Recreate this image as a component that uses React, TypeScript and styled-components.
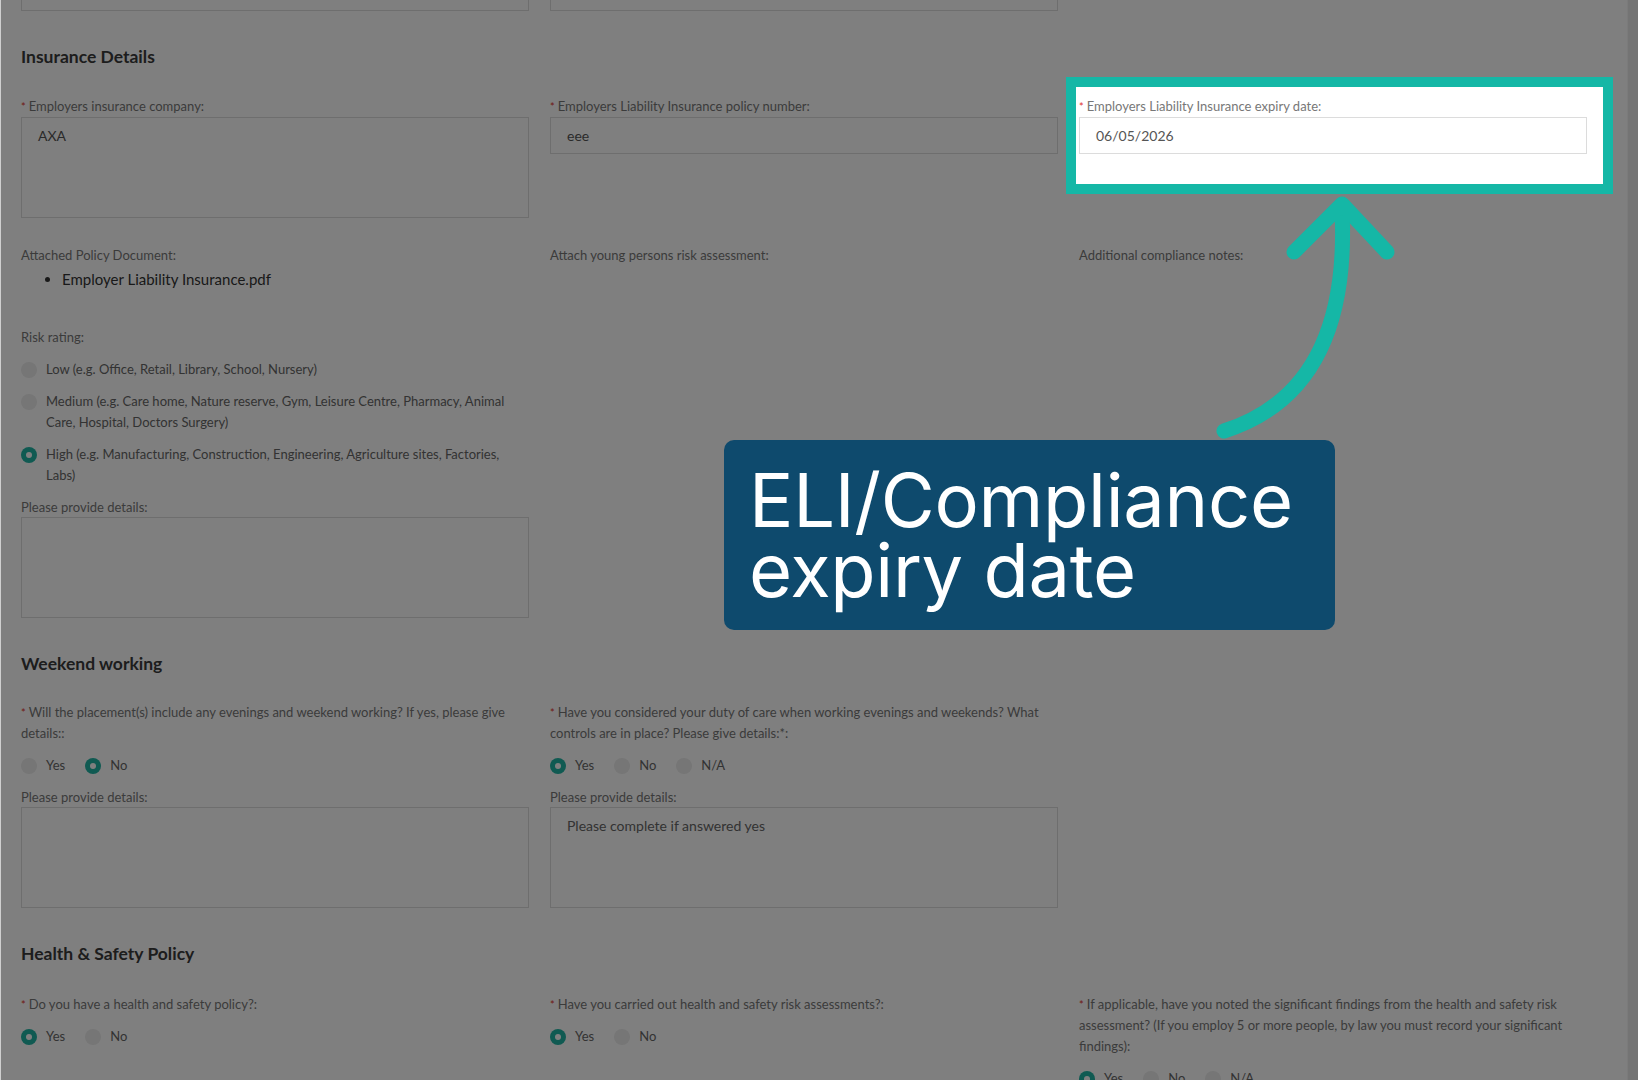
import React from "react";
import styled, { createGlobalStyle } from "styled-components";

const GlobalStyle = createGlobalStyle`
  html, body { margin: 0; padding: 0; }
  body { font-family: Lato, "Liberation Sans", sans-serif; background: #fff; }
  * { box-sizing: border-box; }
`;

const TEAL = "#15b7a6";

const Screen = styled.div`
  position: relative;
  display: flex;
  width: 1638px;
  height: 1080px;
  overflow: hidden;
  background: #fff;
  border-left: 1px solid #cfcfcf;
`;

const Page = styled.div`
  flex: 1;
  padding-left: 20px;
`;

const Scrollbar = styled.div`
  width: 11px;
  background: #e9e9e9;
  border-left: 1px solid #f6f6f6;
`;

const Grid = styled.div<{ $top?: number }>`
  display: grid;
  grid-template-columns: repeat(3, 508px);
  column-gap: 21px;
  align-items: start;
  margin-top: ${(p) => p.$top ?? 0}px;
`;

const Stub = styled.div`
  height: 37px;
  margin-top: -26px;
  border: 1px solid #dcdcdc;
`;

const SectionTitle = styled.h2`
  margin: 35px 0 0;
  font-size: 17.5px;
  line-height: 22px;
  font-weight: 700;
  color: #3a3a3a;
`;

const Field = styled.div`
  display: flex;
  flex-direction: column;
`;

const Label = styled.div<{ $tight?: boolean }>`
  font-size: 13px;
  line-height: ${(p) => (p.$tight ? 19 : 21)}px;
  color: #777;
`;

const Star = styled.span`
  color: #e0322c;
  font-size: 11px;
  margin-right: 3px;
`;

const Box = styled.div<{ $tall?: boolean; $muted?: boolean }>`
  height: ${(p) => (p.$tall ? 101 : 37)}px;
  padding: 9px 16px;
  border: 1px solid #dcdcdc;
  background: #fff;
  font-size: 14px;
  line-height: 18px;
  color: ${(p) => (p.$muted ? "#666" : "#555")};
`;

const FileList = styled.ul`
  margin: 2px 0 0;
  padding-left: 41px;
  font-size: 15px;
  line-height: 22px;
  color: #333;
`;

const Stack = styled.div<{ $gap: number; $top?: number }>`
  display: flex;
  flex-direction: column;
  gap: ${(p) => p.$gap}px;
  margin-top: ${(p) => p.$top ?? 0}px;
`;

const Inline = styled.div`
  display: flex;
  margin-top: 11px;
  margin-bottom: 12px;
`;

const Option = styled.label<{ $inline?: boolean }>`
  display: flex;
  align-items: flex-start;
  gap: 9px;
  margin-right: ${(p) => (p.$inline ? 20 : 0)}px;
  font-size: 13px;
  line-height: 21px;
  color: #666;
`;

const Dot = styled.span<{ $on?: boolean }>`
  flex: none;
  width: 16px;
  height: 16px;
  margin-top: 2.5px;
  border-radius: 50%;
  background: ${(p) => (p.$on ? "#20b4a4" : "#ececec")};
  display: flex;
  align-items: center;
  justify-content: center;
  &::after {
    content: "";
    width: 6px;
    height: 6px;
    border-radius: 50%;
    background: ${(p) => (p.$on ? "#fff" : "transparent")};
  }
`;

const Spotlight = styled(Field)`
  position: relative;
  z-index: 6;
  &::before {
    content: "";
    position: absolute;
    z-index: -1;
    top: -19px;
    left: -13px;
    right: -26px;
    bottom: -40px;
    background: #fff;
    border: 10px solid ${TEAL};
  }
`;

const Shade = styled.div`
  position: absolute;
  inset: 0;
  z-index: 5;
  background: rgba(0, 0, 0, 0.5);
`;

const ArrowLayer = styled.svg`
  position: absolute;
  inset: 0;
  z-index: 7;
  pointer-events: none;
`;

const Callout = styled.div`
  position: absolute;
  z-index: 7;
  left: 723px;
  top: 440px;
  width: 611px;
  height: 190px;
  padding: 25px 26px 0 25px;
  border-radius: 10px;
  background: #0e4a6d;
  color: #fff;
  font-family: Inter, "Noto Sans", sans-serif;
  font-size: 74px;
  line-height: 70px;
  font-weight: 400;
  letter-spacing: -0.3px;
`;

type Choice = { text: string; on?: boolean };

const Radios = ({ items }: { items: Choice[] }) => (
  <Inline>
    {items.map((c) => (
      <Option key={c.text} $inline>
        <Dot $on={c.on} />
        {c.text}
      </Option>
    ))}
  </Inline>
);

const Req = ({ children }: { children: React.ReactNode }) => (
  <Label>
    <Star>*</Star>
    {children}
  </Label>
);

const riskLevels: Choice[] = [
  { text: "Low (e.g. Office, Retail, Library, School, Nursery)" },
  { text: "Medium (e.g. Care home, Nature reserve, Gym, Leisure Centre, Pharmacy, Animal Care, Hospital, Doctors Surgery)" },
  { text: "High (e.g. Manufacturing, Construction, Engineering, Agriculture sites, Factories, Labs)", on: true },
];

export default function App() {
  return (
    <>
      <GlobalStyle />
      <Screen>
        <Page>
          <Grid>
            <Stub />
            <Stub />
          </Grid>

          <SectionTitle>Insurance Details</SectionTitle>
          <Grid $top={28}>
            <Field>
              <Req>Employers insurance company:</Req>
              <Box $tall>AXA</Box>
            </Field>
            <Field>
              <Req>Employers Liability Insurance policy number:</Req>
              <Box>eee</Box>
            </Field>
            <Spotlight>
              <Req>Employers Liability Insurance expiry date:</Req>
              <Box>06/05/2026</Box>
            </Spotlight>
          </Grid>

          <Grid $top={27}>
            <Field>
              <Label>Attached Policy Document:</Label>
              <FileList>
                <li>Employer Liability Insurance.pdf</li>
              </FileList>
            </Field>
            <Label>Attach young persons risk assessment:</Label>
            <Label>Additional compliance notes:</Label>
          </Grid>

          <Grid $top={37}>
            <Field>
              <Label>Risk rating:</Label>
              <Stack $gap={11} $top={11}>
                {riskLevels.map((r) => (
                  <Option key={r.text}>
                    <Dot $on={r.on} />
                    <span>{r.text}</span>
                  </Option>
                ))}
              </Stack>
              <Stack $gap={0} $top={12}>
                <Label $tight>Please provide details:</Label>
                <Box $tall />
              </Stack>
            </Field>
          </Grid>

          <SectionTitle>Weekend working</SectionTitle>
          <Grid $top={27}>
            <Field>
              <Req>Will the placement(s) include any evenings and weekend working? If yes, please give details::</Req>
              <Radios items={[{ text: "Yes" }, { text: "No", on: true }]} />
              <Label $tight>Please provide details:</Label>
              <Box $tall />
            </Field>
            <Field>
              <Req>Have you considered your duty of care when working evenings and weekends? What controls are in place? Please give details:*:</Req>
              <Radios items={[{ text: "Yes", on: true }, { text: "No" }, { text: "N/A" }]} />
              <Label $tight>Please provide details:</Label>
              <Box $tall $muted>Please complete if answered yes</Box>
            </Field>
          </Grid>

          <SectionTitle>Health &amp; Safety Policy</SectionTitle>
          <Grid $top={29}>
            <Field>
              <Req>Do you have a health and safety policy?:</Req>
              <Radios items={[{ text: "Yes", on: true }, { text: "No" }]} />
            </Field>
            <Field>
              <Req>Have you carried out health and safety risk assessments?:</Req>
              <Radios items={[{ text: "Yes", on: true }, { text: "No" }]} />
            </Field>
            <Field>
              <Req>If applicable, have you noted the significant findings from the health and safety risk assessment? (If you employ 5 or more people, by law you must record your significant findings):</Req>
              <Radios items={[{ text: "Yes", on: true }, { text: "No" }, { text: "N/A" }]} />
            </Field>
          </Grid>
        </Page>
        <Scrollbar />

        <Shade />
        <ArrowLayer width="1638" height="1080" viewBox="0 0 1638 1080">
          <g fill="none" stroke={TEAL} strokeWidth="15" strokeLinecap="round" strokeLinejoin="round">
            <path d="M1223 431 C1320 400 1346 312 1341 210" />
            <path d="M1293 252 L1341 204 L1386 252" />
          </g>
        </ArrowLayer>
        <Callout>
          ELI/Compliance
          <br />
          expiry date
        </Callout>
      </Screen>
    </>
  );
}
